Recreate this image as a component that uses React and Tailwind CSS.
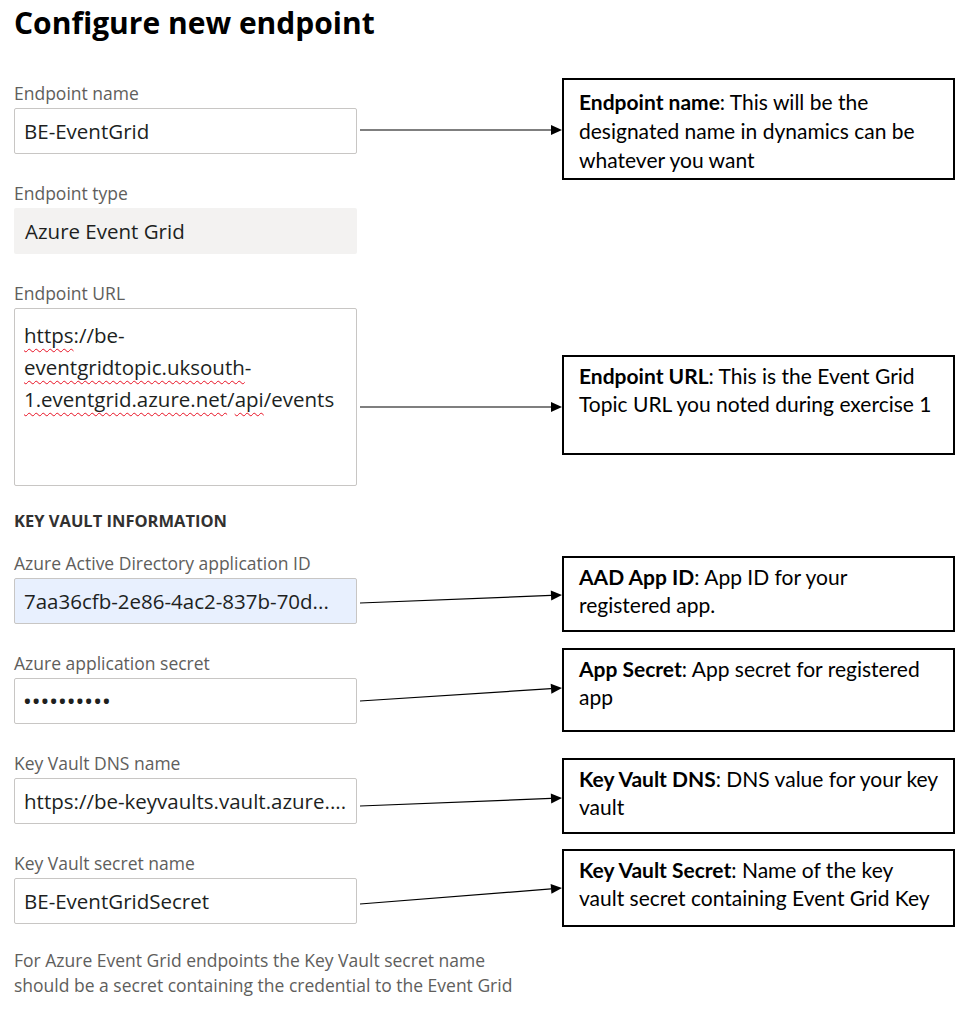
import React from "react";

const fieldFont = { fontFamily: '"Open Sans", "Noto Sans", sans-serif' };
const noteFont = { fontFamily: 'Lato, "Liberation Sans", sans-serif' };

function Label({ children }) {
  return <div className="text-[17.5px] leading-[22px] text-[#605e5c] whitespace-nowrap">{children}</div>;
}

function Field({ label, children, className = "" }) {
  return (
    <div>
      <Label>{label}</Label>
      <div
        className={
          "mt-[4px] h-[46px] rounded-[2px] px-[9px] flex items-center text-[20.5px] text-[#201f1e] whitespace-nowrap overflow-hidden " +
          className
        }
      >
        {children}
      </div>
    </div>
  );
}

const squiggle = "underline decoration-wavy decoration-[#e81123] decoration-1 underline-offset-[5px]";

function Callout({ title, lines, className }) {
  return (
    <div className={"border-2 border-black pl-[15px] pt-[5px] text-[21px] leading-[28px] text-black whitespace-nowrap " + className}>
      {lines.map((line, i) => (
        <div key={i}>
          {i === 0 && (
            <>
              <span className="font-bold">{title}</span>:{" "}
            </>
          )}
          {line}
        </div>
      ))}
    </div>
  );
}

// arrows from the form fields to the notes
const arrows = [
  [360, 130, 562, 130],
  [360, 407, 562, 407],
  [360, 603, 562, 595],
  [360, 701, 562, 688],
  [360, 806, 562, 798],
  [360, 904, 562, 888]
];

function Arrow({ x1, y1, x2, y2 }) {
  const a = Math.atan2(y2 - y1, x2 - x1);
  const len = 11;
  const w = 5;
  const bx = x2 - len * Math.cos(a);
  const by = y2 - len * Math.sin(a);
  const px = -Math.sin(a) * w;
  const py = Math.cos(a) * w;
  return (
    <g>
      <line x1={x1} y1={y1} x2={bx} y2={by} stroke="#000" strokeWidth="1.2" />
      <polygon points={`${x2},${y2} ${bx + px},${by + py} ${bx - px},${by - py}`} fill="#000" />
    </g>
  );
}

export default function App() {
  return (
    <div className="relative w-[957px] h-[1009px] bg-white overflow-hidden">
      <div className="flex">
        {/* form */}
        <div className="ml-[14px] w-[343px] flex-none" style={fieldFont}>
          <h1 className="pt-[3px] text-[30px] leading-[40px] font-bold text-black whitespace-nowrap">
            Configure new endpoint
          </h1>

          <div className="mt-[39px] flex flex-col gap-[28px]">
            <Field label="Endpoint name" className="border border-[#c8c6c4]">
              BE-EventGrid
            </Field>
            <Field label="Endpoint type" className="bg-[#f3f2f1] px-[11px]">
              Azure Event Grid
            </Field>
            <div>
              <Label>Endpoint URL</Label>
              <div className="mt-[4px] h-[178px] rounded-[2px] border border-[#c8c6c4] px-[9px] pt-[10px] text-[20.5px] leading-[32px] text-[#201f1e] whitespace-nowrap">
                <div>
                  <span className={squiggle}>https</span>://be-
                </div>
                <div>
                  <span className={squiggle}>eventgridtopic.uksouth</span>-
                </div>
                <div>
                  <span className={squiggle}>1.eventgrid.azure.net</span>/<span className={squiggle}>api</span>/events
                </div>
              </div>
            </div>
          </div>

          <div className="mt-[25px] text-[16.5px] leading-[20px] font-bold text-[#323130] whitespace-nowrap">
            KEY VAULT INFORMATION
          </div>

          <div className="mt-[21px] flex flex-col gap-[28px]">
            <Field label="Azure Active Directory application ID" className="border border-[#c8c6c4] bg-[#e8f0fe]">
              7aa36cfb-2e86-4ac2-837b-70d...
            </Field>
            <Field label="Azure application secret" className="border border-[#c8c6c4]">
              <span className="text-[18px] tracking-[2px] font-bold">••••••••••</span>
            </Field>
            <Field label="Key Vault DNS name" className="border border-[#c8c6c4]">
              https://be-keyvaults.vault.azure....
            </Field>
            <Field label="Key Vault secret name" className="border border-[#c8c6c4]">
              BE-EventGridSecret
            </Field>
          </div>

          <p className="mt-[24px] text-[17.5px] leading-[25px] text-[#605e5c] whitespace-nowrap">
            For Azure Event Grid endpoints the Key Vault secret name
            <br />
            should be a secret containing the credential to the Event Grid
          </p>
        </div>

        {/* notes */}
        <div className="ml-[205px] w-[393px] flex-none flex flex-col" style={noteFont}>
          <Callout
            className="mt-[78px] h-[102px] pt-[7px] leading-[29px]"
            title="Endpoint name"
            lines={["This will be the", "designated name in dynamics can be", "whatever you want"]}
          />
          <Callout
            className="mt-[175px] h-[100px]"
            title="Endpoint URL"
            lines={["This is the Event Grid", "Topic URL you noted during exercise 1"]}
          />
          <Callout
            className="mt-[101px] h-[76px]"
            title="AAD App ID"
            lines={["App ID for your", "registered app."]}
          />
          <Callout
            className="mt-[16px] h-[84px]"
            title="App Secret"
            lines={["App secret for registered", "app"]}
          />
          <Callout
            className="mt-[26px] h-[76px]"
            title="Key Vault DNS"
            lines={["DNS value for your key", "vault"]}
          />
          <Callout
            className="mt-[15px] h-[78px]"
            title="Key Vault Secret"
            lines={["Name of the key", "vault secret containing Event Grid Key"]}
          />
        </div>
      </div>

      <svg className="absolute inset-0 pointer-events-none" width="957" height="1009">
        {arrows.map(([x1, y1, x2, y2], i) => (
          <Arrow key={i} x1={x1} y1={y1} x2={x2} y2={y2} />
        ))}
      </svg>
    </div>
  );
}
